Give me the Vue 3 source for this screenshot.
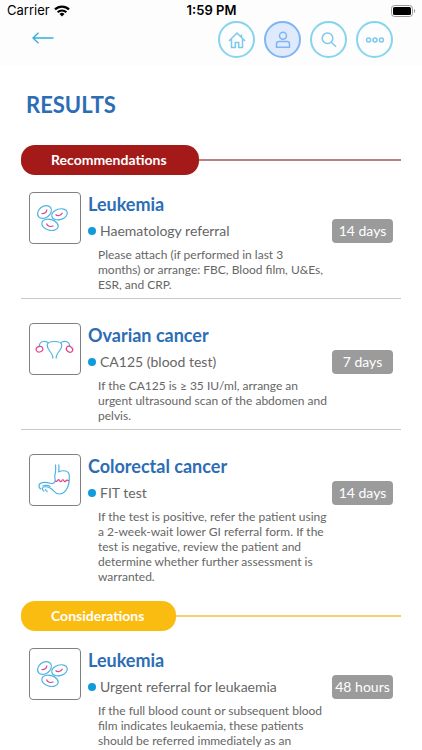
<template>
  <div class="page">
    <header class="topbar">
      <div class="status">
        <div class="carrier">
          <span>Carrier</span>
          <svg width="16" height="12" viewBox="0 0 16 12" aria-hidden="true">
            <path d="M1 4.4a10 10 0 0 1 14 0" fill="none" stroke="#000" stroke-width="2.2" />
            <path d="M3.6 7.2a6.3 6.3 0 0 1 8.8 0" fill="none" stroke="#000" stroke-width="2" />
            <path d="M8 11.6 5.5 9a3.6 3.6 0 0 1 5 0z" />
          </svg>
        </div>
        <span class="time">1:59 PM</span>
        <div class="battery">
          <svg width="25" height="12" viewBox="0 0 25 12" aria-hidden="true">
            <rect x="0.5" y="0.5" width="21" height="11" rx="3" fill="none" stroke="#9a9a9a" />
            <rect x="2" y="2" width="18" height="8" rx="1.6" />
            <path d="M23 4v4c1.6-.5 1.6-3.5 0-4z" fill="#9a9a9a" />
          </svg>
        </div>
      </div>
      <nav class="nav">
        <button class="back" type="button" aria-label="Back">
          <svg width="22" height="12" viewBox="0 0 22 12" aria-hidden="true">
            <path d="M21.5 6H1M6.5.8 1 6l5.5 5.2" />
          </svg>
        </button>
        <div class="actions">
          <button
            v-for="action in actions"
            :key="action.name"
            type="button"
            class="round"
            :class="{ active: action.name === current }"
            :aria-label="action.name"
            @click="current = action.name"
          >
            <svg width="20" height="20" viewBox="0 0 20 20" aria-hidden="true">
              <path :d="action.path" />
            </svg>
          </button>
        </div>
      </nav>
    </header>

    <main class="content">
      <h1>RESULTS</h1>
      <section v-for="section in sections" :key="section.title" :class="section.kind">
        <div class="heading">
          <h2>{{ section.title }}</h2>
        </div>
        <article v-for="item in section.items" :key="item.title" class="item">
          <div class="picture">
            <svg v-if="item.icon === 'cells'" width="50" height="50" viewBox="0 0 50 50" aria-hidden="true">
              <ellipse cx="14.5" cy="19" rx="7.6" ry="5.6" transform="rotate(-38 14.5 19)" />
              <ellipse cx="29.5" cy="21.3" rx="8" ry="5.3" transform="rotate(-16 29.5 21.3)" />
              <ellipse cx="20" cy="31.8" rx="8.4" ry="5.4" transform="rotate(16 20 31.8)" />
              <path class="pink" d="M11.5 20.5c3 .4 5.2-1.3 5.5-4M25.5 21.5c2 2 5.6 1.2 7-1.7M16.5 30.5c.8 2.7 4 3.8 7 2.3" />
            </svg>
            <svg v-else-if="item.icon === 'ovaries'" width="50" height="50" viewBox="0 0 50 50" aria-hidden="true">
              <path d="M22.8 34.5c.4-2.5-.8-4.5-2.8-7-1.8-2.3-2.8-4-2.8-6 0-2.8 3-4 7.300-4s7.300 1.200 7.300 4c0 2-1 3.700-2.800 6-2 2.500-3.200 4.500-2.800 7" />
              <path d="M18 19c-1-1.7-8.5-3.5-8.8 3.5M31 19c1-1.7 8.5-3.5 8.800 3.500" />
              <ellipse class="pink" cx="9.5" cy="25.2" rx="3.4" ry="2.7" transform="rotate(-20 9.5 25.2)" />
              <ellipse class="pink" cx="39.5" cy="25.2" rx="3.4" ry="2.7" transform="rotate(35 39.5 25.2)" />
            </svg>
            <svg v-else width="50" height="50" viewBox="0 0 50 50" aria-hidden="true">
              <path d="M25.5 9.5c.3 4 .5 7-.6 10.500-.6 2.200.7 4.500.1 6.500-.8 2.500-3 2.300-5 1.700-5-1.500-11-1-11 2.500 0 2 .9 3 2.200 3.300" />
              <path d="M28.800 9.500c.3 2.500.2 5-.1 7.300 4.500-2 10.300-1.300 10.600 3.700.6 9.500-3 18.500-10 18.500-4.500 0-5.300-3.500-8.300-5.500-3-2-8-2.500-8.700-.3-.4 1.600 1 2.600 2 3.300" />
              <path d="M15.500 34c0 1.500 1 2 2 3M12.500 31c3-1 6-.5 8 .5" />
              <path class="pink" d="M25 26c1 .5 2 .5 2.700-.6.700-1.100 1.500-1 2 .3s1.500 1.300 2.100 0 1.500-1.300 2.100 0 1.500 1.300 2.100.2 1.500-.8 3 .1" />
            </svg>
          </div>
          <div class="details">
            <h3>{{ item.title }}</h3>
            <div class="test">
              <span class="name">{{ item.test }}</span>
              <span class="due">{{ item.due }}</span>
            </div>
            <p>{{ item.text }}</p>
          </div>
        </article>
      </section>
    </main>
  </div>
</template>

<script setup>
  import { ref } from 'vue';

  const current = ref('Patient');

  const actions = [
    { name: 'Home', path: 'M2 11 10 3l8 8M4.5 9v8.5h3.8v-5h3.4v5h3.8V9M14.5 7.3V4.5' },
    { name: 'Patient', path: 'M10 2.2a3.5 3.5 0 1 0 0 7a3.5 3.5 0 1 0 0-7M6 11.5h8q2.5 0 2.5 2.5V17.2h-13v-3.2q0-2.5 2.5-2.5z' },
    { name: 'Search', path: 'M8.5 3a5.3 5.3 0 1 0 0 10.6a5.3 5.3 0 1 0 0-10.6M12.3 12.2l4.7 4.6' },
    { name: 'More', path: 'M3.6 8a2 2 0 1 0 0 4a2 2 0 1 0 0-4M10 8a2 2 0 1 0 0 4a2 2 0 1 0 0-4M16.4 8a2 2 0 1 0 0 4a2 2 0 1 0 0-4' }
  ];

  const sections = [
    {
      title: 'Recommendations',
      kind: 'recommendations',
      items: [
        {
          icon: 'cells',
          title: 'Leukemia',
          test: 'Haematology referral',
          due: '14 days',
          text: 'Please attach (if performed in last 3 months) or arrange: FBC, Blood film, U&Es, ESR, and CRP.'
        },
        {
          icon: 'ovaries',
          title: 'Ovarian cancer',
          test: 'CA125 (blood test)',
          due: '7 days',
          text: 'If the CA125 is ≥ 35 IU/ml, arrange an urgent ultrasound scan of the abdomen and pelvis.'
        },
        {
          icon: 'stomach',
          title: 'Colorectal cancer',
          test: 'FIT test',
          due: '14 days',
          text: 'If the test is positive, refer the patient using a 2-week-wait lower GI referral form. If the test is negative, review the patient and determine whether further assessment is warranted.'
        }
      ]
    },
    {
      title: 'Considerations',
      kind: 'considerations',
      items: [
        {
          icon: 'cells',
          title: 'Leukemia',
          test: 'Urgent referral for leukaemia',
          due: '48 hours',
          text: 'If the full blood count or subsequent blood film indicates leukaemia, these patients should be referred immediately as an'
        }
      ]
    }
  ];
</script>

<style>
body {
  margin: 0;
  background: #fff;
}
</style>

<style scoped>
.page {
  font-family: Lato, "Liberation Sans", sans-serif;
  color: #666;
}

h1, h2, h3, p {
  margin: 0;
}

button {
  padding: 0;
  border: none;
  background: none;
  cursor: pointer;
}

svg {
  display: block;
}

.topbar {
  background: #fdfdfd;
  padding-bottom: 7px;
}

/* Phone status line */
.status {
  display: grid;
  grid-template-columns: 1fr auto 1fr;
  align-items: center;
  height: 21px;
  padding: 0 6px 0 7px;
  font: 13px/21px Inter, "Liberation Sans", sans-serif;
  color: #000;
}

.carrier {
  display: flex;
  align-items: center;
  gap: 4px;
}

.time {
  font-weight: 600;
}

.battery {
  justify-self: end;
}

.nav {
  display: flex;
  justify-content: space-between;
  align-items: center;
  padding: 0 29px 0 32px;
}

.back {
  padding-bottom: 4px;
}

.back svg {
  fill: none;
  stroke: #35aedb;
  stroke-width: 1.3;
}

.actions {
  display: flex;
  gap: 9px;
}

.round {
  display: flex;
  align-items: center;
  justify-content: center;
  box-sizing: border-box;
  width: 37px;
  height: 37px;
  border: 2px solid #86d5ee;
  border-radius: 50%;
}

.round svg {
  fill: none;
  stroke: #7cc9ec;
  stroke-width: 1.5;
}

.round.active {
  border-color: #80b5f3;
  background: #dfebfd;
}

.round.active svg {
  stroke: #80b5f3;
}

.content {
  padding: 25px 21px 0;
}

h1 {
  padding: 0 5px;
  font-size: 22px;
  line-height: 30px;
  color: #2c6db4;
}

/* Coloured pill with a rule running to the right edge */
.heading {
  display: flex;
  align-items: center;
  margin-bottom: 17px;
}

.recommendations .heading {
  margin-top: 25px;
}

.considerations .heading {
  margin-top: 17px;
}

.heading::after {
  content: "";
  flex: 1;
  height: 2px;
}

h2 {
  padding: 0 32px 0 30px;
  border-radius: 14px;
  font-size: 14px;
  line-height: 30px;
  color: #fff;
}

.recommendations h2 {
  background: #a31a19;
}

.recommendations .heading::after {
  background: #bd8080;
}

.considerations h2 {
  background: #fbbc12;
}

.considerations .heading::after {
  background: #f5cf70;
}

.item {
  display: flex;
  align-items: flex-start;
  gap: 7px;
  padding: 0 8px;
}

.item:not(:last-child) {
  margin-bottom: 24px;
  padding-bottom: 6px;
  border-bottom: 1px solid #c8c8c8;
}

.picture {
  flex: none;
  border: 1px solid #808080;
  border-radius: 4px;
}

.picture svg {
  fill: none;
  stroke: #4db4e4;
  stroke-width: 1.2;
}

.picture .pink {
  stroke: #e0448c;
}

.details {
  flex: 1;
}

h3 {
  font-size: 18px;
  line-height: 24px;
  color: #2c6db4;
}

.test {
  display: flex;
  align-items: center;
  margin: 3px 0 4px;
  font-size: 14px;
  line-height: 24px;
}

.name {
  display: flex;
  flex: 1;
  align-items: center;
  gap: 4px;
}

.name::before {
  content: "";
  width: 8px;
  height: 8px;
  border-radius: 50%;
  background: #109bdc;
}

.due {
  width: 61px;
  border-radius: 4px;
  background: #9b9b9b;
  color: #fff;
  text-align: center;
  white-space: nowrap;
}

p {
  padding: 0 65px 0 10px;
  font-size: 12px;
  line-height: 15px;
}
</style>
